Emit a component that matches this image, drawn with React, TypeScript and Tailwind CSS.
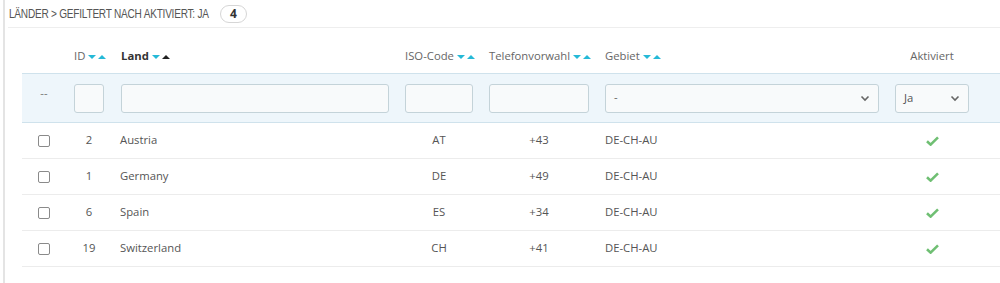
import React from "react";

const cols = "grid grid-cols-[44px_46px_285px_84px_116px_290px_90px_1fr]";

function Sort({ active }: { active?: boolean }) {
  return (
    <svg width="18" height="6" viewBox="0 0 18 6" className="ml-[3px] inline-block">
      <polygon points="0,1 8,1 4,5" fill="#25b9d7" />
      <polygon points="10,5 18,5 14,1" fill={active ? "#222" : "#25b9d7"} />
    </svg>
  );
}

function Chevron() {
  return (
    <svg width="10" height="7" viewBox="0 0 10 7">
      <path d="M1.5 1.5 L5 5 L8.5 1.5" stroke="#666" strokeWidth="1.6" fill="none" />
    </svg>
  );
}

function Check() {
  return (
    <svg width="13" height="10" viewBox="0 0 13 10">
      <path d="M1 5.2 L4.6 8.6 L12 1.4" stroke="#6fbf73" strokeWidth="2.6" fill="none" strokeLinejoin="miter" />
    </svg>
  );
}

const rows = [
  { id: 2, name: "Austria", iso: "AT", tel: "+43" },
  { id: 1, name: "Germany", iso: "DE", tel: "+49" },
  { id: 6, name: "Spain", iso: "ES", tel: "+34" },
  { id: 19, name: "Switzerland", iso: "CH", tel: "+41" },
];

export default function App() {
  const input =
    "h-[29px] rounded-[3px] border border-[#c4d3d9] bg-[#f8fafb]";
  return (
    <div className="w-[1000px] h-[283px] bg-white overflow-hidden font-['Open_Sans',sans-serif] text-[11.3px] text-[#555]">
      <div className="ml-[3px] h-full border-l-[2px] border-[#e4e4e4] pl-[3px]">
        <div className="h-[28px] border-b border-[#eeeeee] flex items-center pl-[1px]">
          <span className="block w-[202px] whitespace-nowrap">
            <span className="inline-block origin-left scale-x-[0.775] whitespace-nowrap font-['Liberation_Sans',sans-serif] text-[13px] text-[#555] tracking-[-0.3px]">
              LÄNDER &gt; GEFILTERT NACH AKTIVIERT: JA
            </span>
          </span>
          <span className="ml-[9px] h-[18px] w-[27px] rounded-full border border-[#d6d6d6] flex items-center justify-center font-bold text-[12px] text-[#333]">
            4
          </span>
        </div>
        <div className="ml-[14px]">
          <div className={`${cols} h-[45px] items-end pb-[8px] text-[#666]`}>
            <div />
            <div className="pl-[8px] flex items-center">ID<Sort /></div>
            <div className="pl-[9px] flex items-center font-bold text-[#333]">Land<Sort active /></div>
            <div className="pl-[8px] flex items-center">ISO-Code<Sort /></div>
            <div className="pl-[8px] flex items-center">Telefonvorwahl<Sort /></div>
            <div className="pl-[8px] flex items-center">Gebiet<Sort /></div>
            <div className="text-center">Aktiviert</div>
            <div />
          </div>
          <div className={`${cols} h-[50px] items-center bg-[#eef6fb] border-t border-b border-[#cfe2ec]`}>
            <div className="text-center text-[#777] -mt-[10px]">--</div>
            <div className="px-[8px]"><div className={input} /></div>
            <div className="pl-[9px] pr-[8px]"><div className={input} /></div>
            <div className="px-[8px]"><div className={input} /></div>
            <div className="px-[8px]"><div className={input} /></div>
            <div className="px-[8px]">
              <div className={`${input} flex items-center justify-between pl-[8px] pr-[8px] text-[#666]`}>
                <span className="-mt-[2px]">-</span>
                <Chevron />
              </div>
            </div>
            <div className="px-[8px]">
              <div className={`${input} flex items-center justify-between pl-[8px] pr-[8px] text-[#555]`}>
                <span>Ja</span>
                <Chevron />
              </div>
            </div>
            <div />
          </div>
          {rows.map((r) => (
            <div key={r.id} className={`${cols} h-[36px] items-center border-b border-[#ececec]`}>
              <div className="flex justify-center">
                <div className="w-[12px] h-[12px] border-[1.5px] border-[#8a8a8a] rounded-[2px]" />
              </div>
              <div className="text-center">{r.id}</div>
              <div className="pl-[8px]">{r.name}</div>
              <div className="text-center">{r.iso}</div>
              <div className="text-center">{r.tel}</div>
              <div className="pl-[8px]">DE-CH-AU</div>
              <div className="flex justify-center"><Check /></div>
              <div />
            </div>
          ))}
        </div>
      </div>
    </div>
  );
}
